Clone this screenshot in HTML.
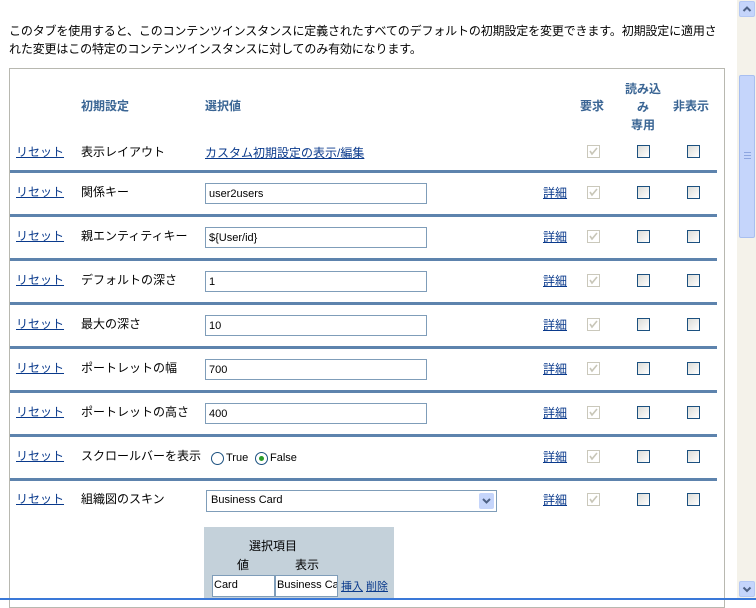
<!DOCTYPE html>
<html><head><meta charset="utf-8"><style>
*{margin:0;padding:0;box-sizing:border-box}
body{width:756px;height:600px;overflow:hidden;background:#fff;font-family:"Liberation Sans","Noto Sans CJK JP",sans-serif;font-size:12px;color:#000;position:relative}
.a{position:absolute;white-space:nowrap}
.lk{color:#0a3a8c;text-decoration:underline}
.h{color:#3a6594;font-weight:bold}
.sep{position:absolute;left:10px;width:707px;height:3px;background:#5d83ad}
.in{position:absolute;left:205px;width:222px;height:21px;border:1px solid #7f9db9;padding:3px 3px;font-size:11px;background:#fff}
.cb{position:absolute;width:13px;height:13px;border:1px solid #1c5180;background:linear-gradient(135deg,#dcdcd7,#fff)}
.cd{border-color:#cac8bb;background:#fff}
.cd svg{position:absolute;left:1px;top:1px}
</style></head><body>
<div class="a" style="left:9px;top:22px;line-height:18px;white-space:normal;width:712px;letter-spacing:-0.15px">このタブを使用すると、このコンテンツインスタンスに定義されたすべてのデフォルトの初期設定を変更できます。初期設定に適用された変更はこの特定のコンテンツインスタンスに対してのみ有効になります。</div>
<div style="position:absolute;left:9px;top:68px;width:716px;height:540px;border:1px solid #b8b8b0"></div>
<div class="a h" style="left:81px;top:97px">初期設定</div>
<div class="a h" style="left:205px;top:97px">選択値</div>
<div class="a h" style="left:580px;top:97px">要求</div>
<div class="a h" style="left:622px;top:80px;text-align:center;width:42px;white-space:normal;line-height:18px">読み込<br>み<br>専用</div>
<div class="a h" style="left:673px;top:97px">非表示</div>

<div class="a lk" style="left:16px;top:143px">リセット</div>
<div class="a" style="left:81px;top:143px">表示レイアウト</div>
<div class="a lk" style="left:205px;top:144px">カスタム初期設定の表示/編集</div>
<div class="cb cd" style="left:587px;top:145px"><svg width="9" height="9"><path d="M1 4l2 3 5-6" stroke="#c8c6b8" stroke-width="1.6" fill="none"/></svg></div><div class="cb" style="left:637px;top:145px"></div><div class="cb" style="left:687px;top:145px"></div>

<div class="sep" style="top:170px"></div>
<div class="a lk" style="left:16px;top:183px">リセット</div><div class="a" style="left:81px;top:183px">関係キー</div>
<input class="in" style="top:183px" value="user2users"><div class="a lk" style="left:543px;top:184px">詳細</div>
<div class="cb cd" style="left:587px;top:186px"><svg width="9" height="9"><path d="M1 4l2 3 5-6" stroke="#c8c6b8" stroke-width="1.6" fill="none"/></svg></div><div class="cb" style="left:637px;top:186px"></div><div class="cb" style="left:687px;top:186px"></div>

<div class="sep" style="top:214px"></div>
<div class="a lk" style="left:16px;top:227px">リセット</div><div class="a" style="left:81px;top:227px">親エンティティキー</div>
<input class="in" style="top:227px" value="${User/id}"><div class="a lk" style="left:543px;top:228px">詳細</div>
<div class="cb cd" style="left:587px;top:230px"><svg width="9" height="9"><path d="M1 4l2 3 5-6" stroke="#c8c6b8" stroke-width="1.6" fill="none"/></svg></div><div class="cb" style="left:637px;top:230px"></div><div class="cb" style="left:687px;top:230px"></div>

<div class="sep" style="top:258px"></div>
<div class="a lk" style="left:16px;top:271px">リセット</div><div class="a" style="left:81px;top:271px">デフォルトの深さ</div>
<input class="in" style="top:271px" value="1"><div class="a lk" style="left:543px;top:272px">詳細</div>
<div class="cb cd" style="left:587px;top:274px"><svg width="9" height="9"><path d="M1 4l2 3 5-6" stroke="#c8c6b8" stroke-width="1.6" fill="none"/></svg></div><div class="cb" style="left:637px;top:274px"></div><div class="cb" style="left:687px;top:274px"></div>

<div class="sep" style="top:302px"></div>
<div class="a lk" style="left:16px;top:315px">リセット</div><div class="a" style="left:81px;top:315px">最大の深さ</div>
<input class="in" style="top:315px" value="10"><div class="a lk" style="left:543px;top:316px">詳細</div>
<div class="cb cd" style="left:587px;top:318px"><svg width="9" height="9"><path d="M1 4l2 3 5-6" stroke="#c8c6b8" stroke-width="1.6" fill="none"/></svg></div><div class="cb" style="left:637px;top:318px"></div><div class="cb" style="left:687px;top:318px"></div>

<div class="sep" style="top:346px"></div>
<div class="a lk" style="left:16px;top:359px">リセット</div><div class="a" style="left:81px;top:359px">ポートレットの幅</div>
<input class="in" style="top:359px" value="700"><div class="a lk" style="left:543px;top:360px">詳細</div>
<div class="cb cd" style="left:587px;top:362px"><svg width="9" height="9"><path d="M1 4l2 3 5-6" stroke="#c8c6b8" stroke-width="1.6" fill="none"/></svg></div><div class="cb" style="left:637px;top:362px"></div><div class="cb" style="left:687px;top:362px"></div>

<div class="sep" style="top:390px"></div>
<div class="a lk" style="left:16px;top:403px">リセット</div><div class="a" style="left:81px;top:403px">ポートレットの高さ</div>
<input class="in" style="top:403px" value="400"><div class="a lk" style="left:543px;top:404px">詳細</div>
<div class="cb cd" style="left:587px;top:406px"><svg width="9" height="9"><path d="M1 4l2 3 5-6" stroke="#c8c6b8" stroke-width="1.6" fill="none"/></svg></div><div class="cb" style="left:637px;top:406px"></div><div class="cb" style="left:687px;top:406px"></div>

<div class="sep" style="top:434px"></div>
<div class="a lk" style="left:16px;top:447px">リセット</div><div class="a" style="left:81px;top:447px">スクロールバーを表示</div>
<div class="a" style="left:211px;top:452px;width:13px;height:13px;border:1px solid #1c5180;border-radius:50%"></div>
<div class="a" style="left:226px;top:452px;font-size:11px">True</div>
<div class="a" style="left:255px;top:452px;width:13px;height:13px;border:1px solid #1c5180;border-radius:50%"><div style="position:absolute;left:3px;top:3px;width:5px;height:5px;border-radius:50%;background:#2a9d2a"></div></div>
<div class="a" style="left:270px;top:452px;font-size:11px">False</div>
<div class="a lk" style="left:543px;top:448px">詳細</div>
<div class="cb cd" style="left:587px;top:450px"><svg width="9" height="9"><path d="M1 4l2 3 5-6" stroke="#c8c6b8" stroke-width="1.6" fill="none"/></svg></div><div class="cb" style="left:637px;top:450px"></div><div class="cb" style="left:687px;top:450px"></div>

<div class="sep" style="top:478px"></div>
<div class="a lk" style="left:16px;top:490px">リセット</div><div class="a" style="left:81px;top:490px">組織図のスキン</div>
<div class="a" style="left:206px;top:490px;width:291px;height:22px;border:1px solid #7f9db9;padding:3px 4px;font-size:11px">Business Card<div style="position:absolute;right:2px;top:2px;width:15px;height:16px;background:#c5d5fb;border-radius:2px"><svg width="15" height="16"><path d="M4 6l3.5 3.5L11 6" stroke="#4d6185" stroke-width="2" fill="none"/></svg></div></div>
<div class="a lk" style="left:543px;top:491px">詳細</div>
<div class="cb cd" style="left:587px;top:493px"><svg width="9" height="9"><path d="M1 4l2 3 5-6" stroke="#c8c6b8" stroke-width="1.6" fill="none"/></svg></div><div class="cb" style="left:637px;top:493px"></div><div class="cb" style="left:687px;top:493px"></div>

<div class="a" style="left:204px;top:527px;width:190px;height:73px;background:#c4d1da"></div>
<div class="a" style="left:249px;top:537px">選択項目</div>
<div class="a" style="left:237px;top:556px">値</div>
<div class="a" style="left:295px;top:556px">表示</div>
<div class="a" style="left:212px;top:575px;width:63px;height:22px;border:1px solid #7f9db9;background:#fff;padding:3px 1px;font-size:11px">Card</div>
<div class="a" style="left:275px;top:575px;width:63px;height:22px;border:1px solid #7f9db9;background:#fff;padding:3px 1px;font-size:11px;overflow:hidden">Business Ca</div>
<div class="a lk" style="left:341px;top:578px;font-size:11px">挿入</div>
<div class="a lk" style="left:366px;top:578px;font-size:11px">削除</div>

<div class="a" style="left:0;top:598px;width:756px;height:2px;background:#3a78d8"></div>
<div class="a" style="left:737px;top:0;width:19px;height:598px;background:#f4f2ea"></div>
<div class="a" style="left:739px;top:1px;width:16px;height:16px;background:#c5d5fb;border:1px solid #b4c8f4;border-radius:2px"><svg width="14" height="14"><path d="M3.5 9l3.5-3.5L10.5 9" stroke="#4d6185" stroke-width="2" fill="none"/></svg></div>
<div class="a" style="left:739px;top:75px;width:16px;height:163px;background:#c5d5fb;border:1px solid #a8bff0;border-radius:2px"><div style="position:absolute;left:4px;top:76px;width:7px;height:7px;border-top:1px solid #8ea6e0;border-bottom:1px solid #8ea6e0"><div style="margin-top:2px;height:1px;background:#8ea6e0"></div></div></div>
<div class="a" style="left:739px;top:581px;width:16px;height:16px;background:#c5d5fb;border:1px solid #b4c8f4;border-radius:2px"><svg width="14" height="14"><path d="M3.5 5.5l3.5 3.5L10.5 5.5" stroke="#4d6185" stroke-width="2" fill="none"/></svg></div>
</body></html>
